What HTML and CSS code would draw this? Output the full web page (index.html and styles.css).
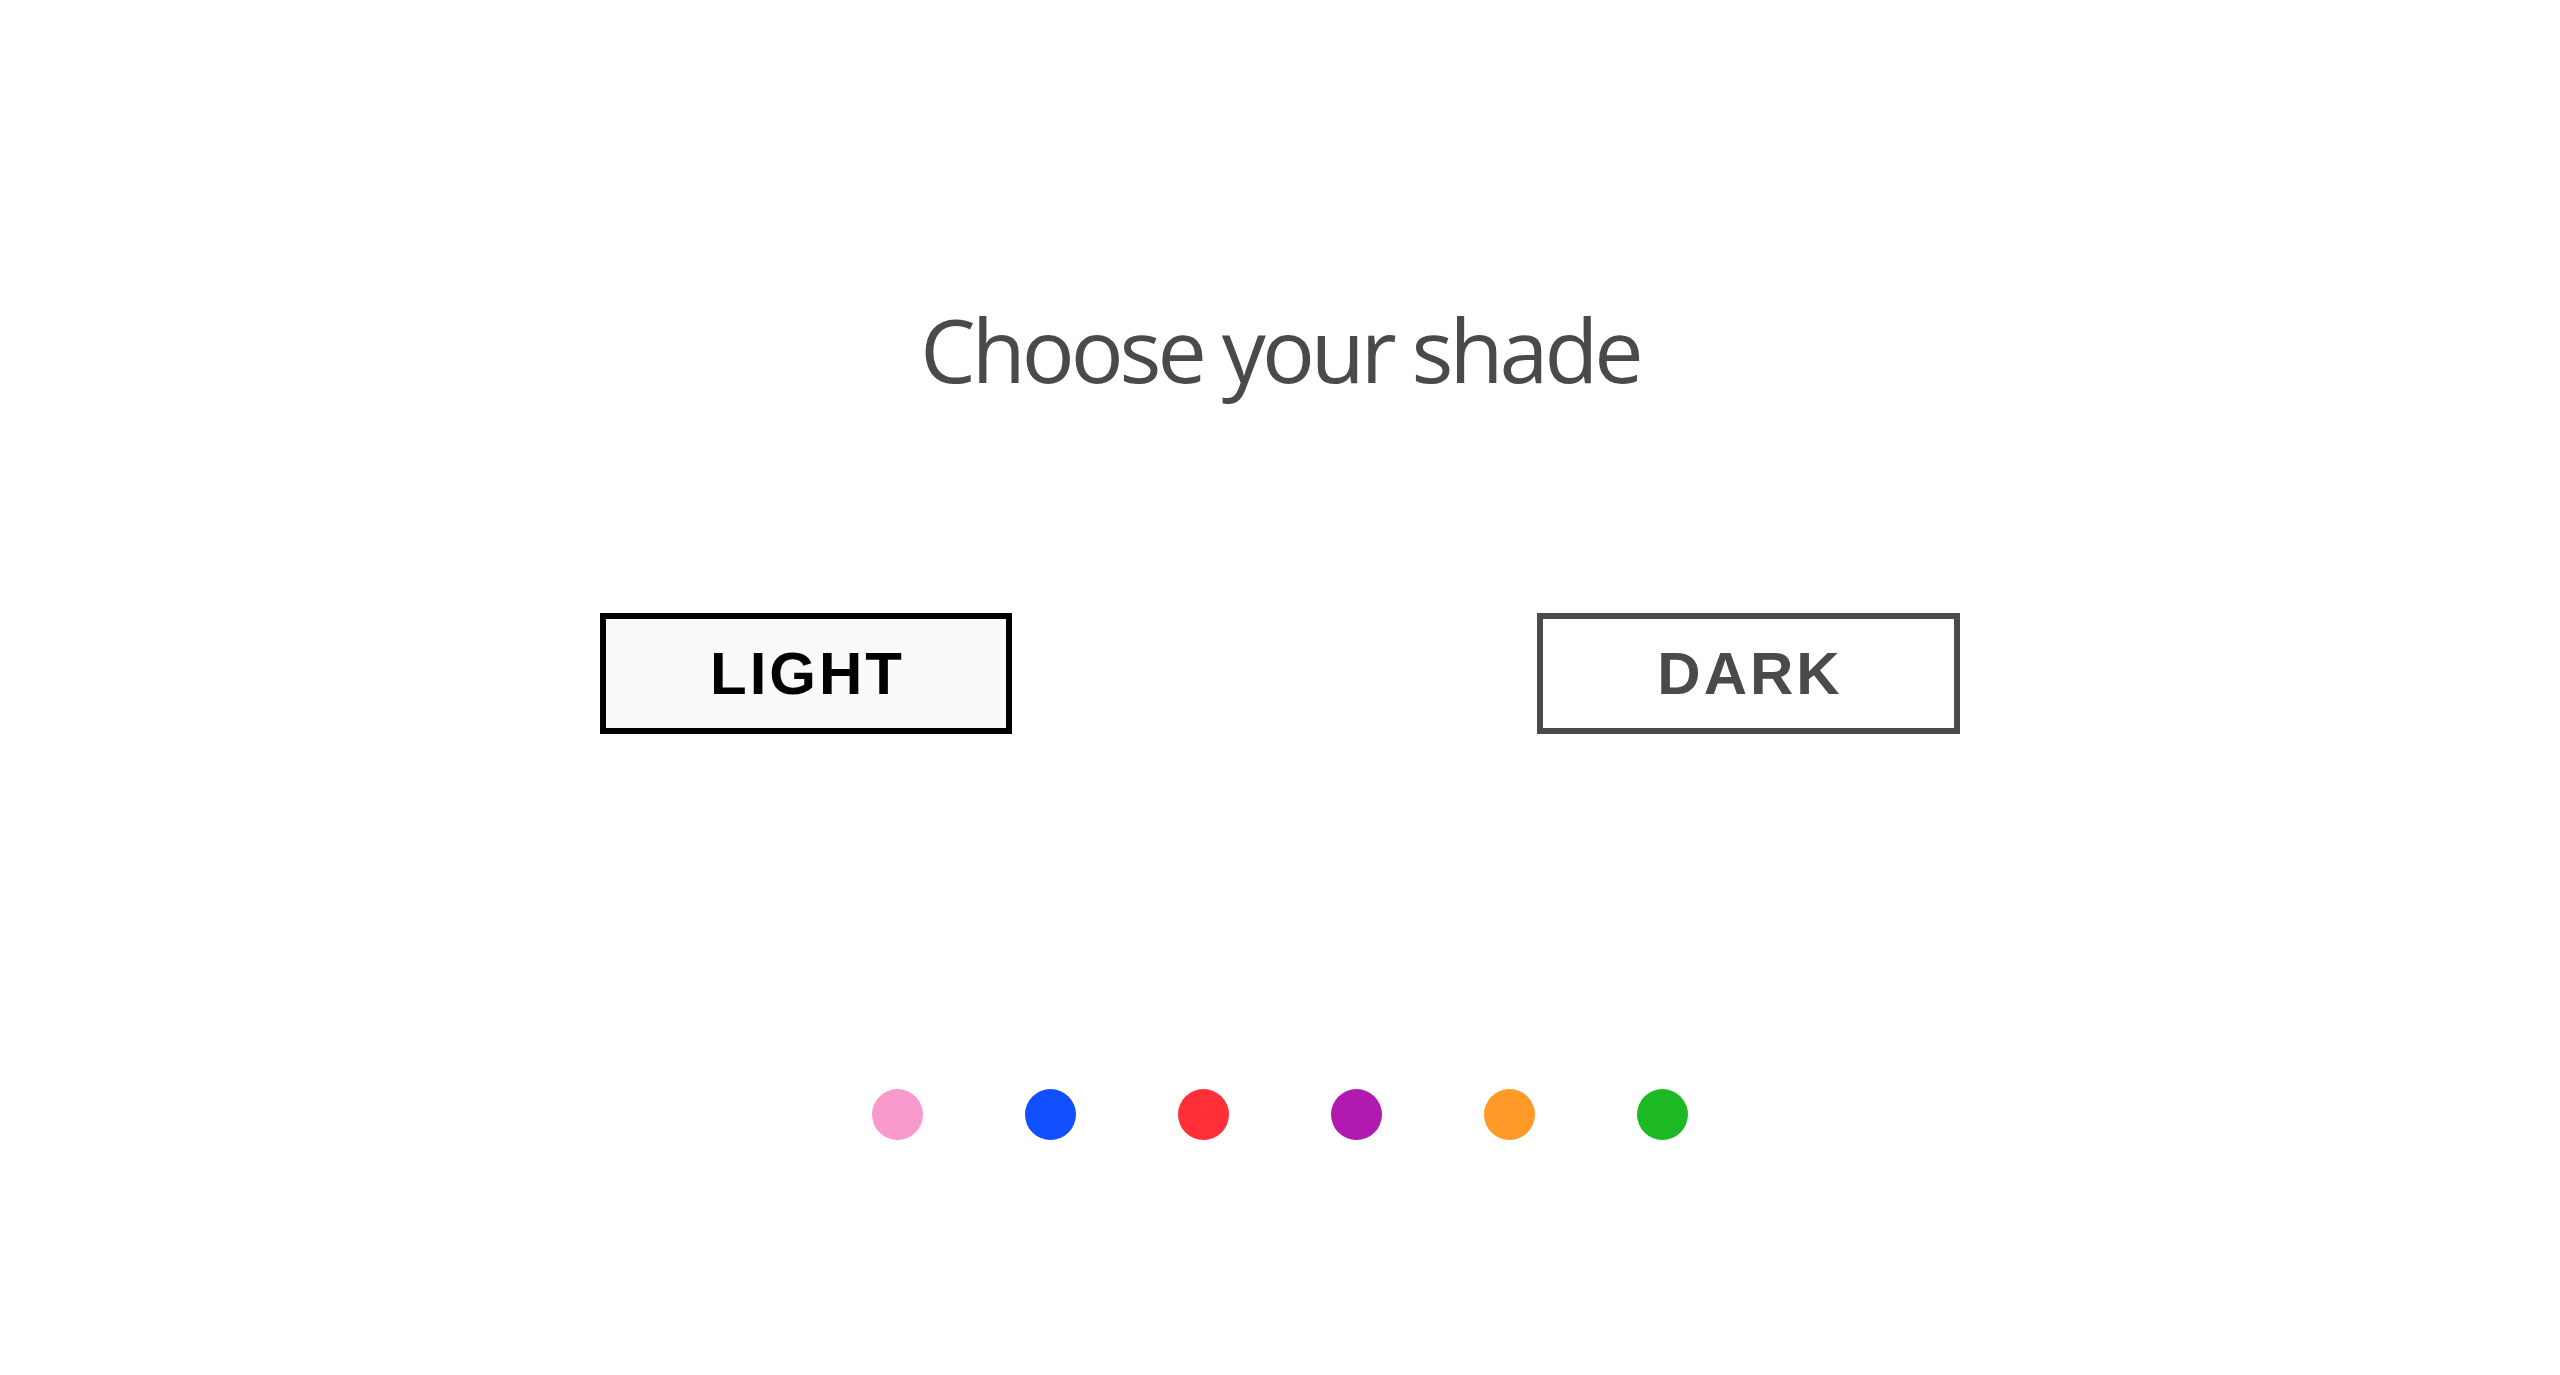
FILE: index.html
```html
<!DOCTYPE html>
<html lang="en">
<head>
<meta charset="utf-8">
<title>Choose your shade</title>
<link rel="stylesheet" href="styles.css">
</head>
<body>
<main class="page">
  <h1 class="title">Choose your shade</h1>
  <div class="shades">
    <button class="shade shade--light">LIGHT</button>
    <button class="shade shade--dark">DARK</button>
  </div>
  <div class="swatches">
    <span class="dot dot--pink"></span>
    <span class="dot dot--blue"></span>
    <span class="dot dot--red"></span>
    <span class="dot dot--purple"></span>
    <span class="dot dot--orange"></span>
    <span class="dot dot--green"></span>
  </div>
</main>
</body>
</html>
```
FILE: styles.css
```css
html, body {
  margin: 0;
  padding: 0;
  background: #ffffff;
}
.page {
  width: 2560px;
  height: 1375px;
  display: flex;
  flex-direction: column;
  align-items: center;
}
.title {
  margin: 289px 0 0 0;
  font-family: "Open Sans", "Noto Sans", sans-serif;
  font-weight: 400;
  font-size: 88px;
  line-height: 120px;
  color: #4a4a4a;
  letter-spacing: -4px;
}
.shades {
  margin-top: 204px;
  display: flex;
  gap: 525px;
}
.shade {
  height: 121px;
  box-sizing: border-box;
  font-family: "Liberation Sans", Arial, sans-serif;
  font-weight: 700;
  font-size: 60px;
  letter-spacing: 3px;
  padding: 0;
  text-indent: 3px;
  cursor: pointer;
}
.shade--light {
  width: 412px;
  border: 6px solid #000000;
  background: #fafafa;
  color: #000000;
}
.shade--dark {
  width: 423px;
  border: 6px solid #4a4a4a;
  background: #ffffff;
  color: #4a4a4a;
}
.swatches {
  margin-top: 355px;
  display: flex;
  gap: 102px;
}
.dot {
  width: 51px;
  height: 51px;
  border-radius: 50%;
  display: block;
}
.dot--pink { background: #f99ace; }
.dot--blue { background: #1150ff; }
.dot--red { background: #ff2f37; }
.dot--purple { background: #b01aaf; }
.dot--orange { background: #ff9a28; }
.dot--green { background: #1db923; }
```
